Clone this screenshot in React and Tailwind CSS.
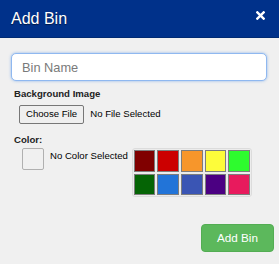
import React from "react";

const swatches = [
  "#800000",
  "#cc0000",
  "#f7962b",
  "#fdfc3a",
  "#2efb2e",
  "#056405",
  "#2274d8",
  "#3a55b4",
  "#4b0082",
  "#e81a5d",
];

export default function App() {
  return (
    <div
      className="w-[279px] h-[264px] bg-[#f0f0f0] flex flex-col overflow-hidden text-[#222]"
      style={{ fontFamily: '"Liberation Sans", Arial, sans-serif' }}
    >
      <div className="h-[38px] shrink-0 bg-[#00318a] border-b border-[#002a72] px-[11px] flex items-center justify-between">
        <h1 className="text-[16px] leading-[18px] text-white [text-shadow:0_1px_1px_rgba(0,0,0,0.5)]">
          Add Bin
        </h1>
        <svg width="9" height="9" viewBox="0 0 10 10" className="mr-[3px] mb-[6px]">
          <path d="M1.5 1.5 L8.5 8.5 M8.5 1.5 L1.5 8.5" stroke="white" strokeWidth="2.6" strokeLinecap="square" />
        </svg>
      </div>

      <div className="flex-1 flex flex-col pt-[15px] pl-[11px] pr-[12px]">
        <input
          type="text"
          placeholder="Bin Name"
          className="h-[28px] w-full bg-white rounded-[5px] border border-[#8fb8f0] px-[10px] text-[12.8px] text-[#555] placeholder:text-[#7a7a7a] outline-none shadow-[0_0_3px_rgba(102,160,233,0.7)]"
        />

        <label className="mt-[7px] ml-[3px] text-[9.6px] leading-[12px] font-bold">
          Background Image
        </label>
        <div className="mt-[5px] ml-[8px] flex items-center gap-[6px]">
          <button className="h-[19px] px-[6px] bg-[#efefef] border border-[#777] rounded-[2px] text-[9.6px] text-black">
            Choose File
          </button>
          <span className="text-[9.6px] text-black">No File Selected</span>
        </div>

        <label className="mt-[10px] ml-[3px] text-[9.6px] leading-[12px] font-bold">
          Color:
        </label>
        <div className="mt-[2px] ml-[11px] flex items-start">
          <div className="w-[22px] h-[22px] shrink-0 border-[1.5px] border-[#b0b0b0] rounded-[2px]" />
          <span className="ml-[6px] mt-[2px] text-[9.6px] leading-[12px] text-black whitespace-nowrap">
            No Color Selected
          </span>
          <div className="ml-[4px] p-[1px] border border-[#dcdcdc] rounded-[3px] bg-[#ececec] grid grid-cols-5 gap-x-[2px] gap-y-[2px]">
            {swatches.map((c) => (
              <div
                key={c}
                className="w-[21.6px] h-[21.6px] border-[1.5px] border-[#7c7c7c]"
                style={{ backgroundColor: c }}
              />
            ))}
          </div>
        </div>
      </div>

      <div className="flex justify-end pr-[5px] pb-[12px]">
        <button className="w-[73px] h-[28px] bg-[#5cb85c] border border-[#53ad53] rounded-[4px] text-white text-[11.7px]">
          Add Bin
        </button>
      </div>
    </div>
  );
}
